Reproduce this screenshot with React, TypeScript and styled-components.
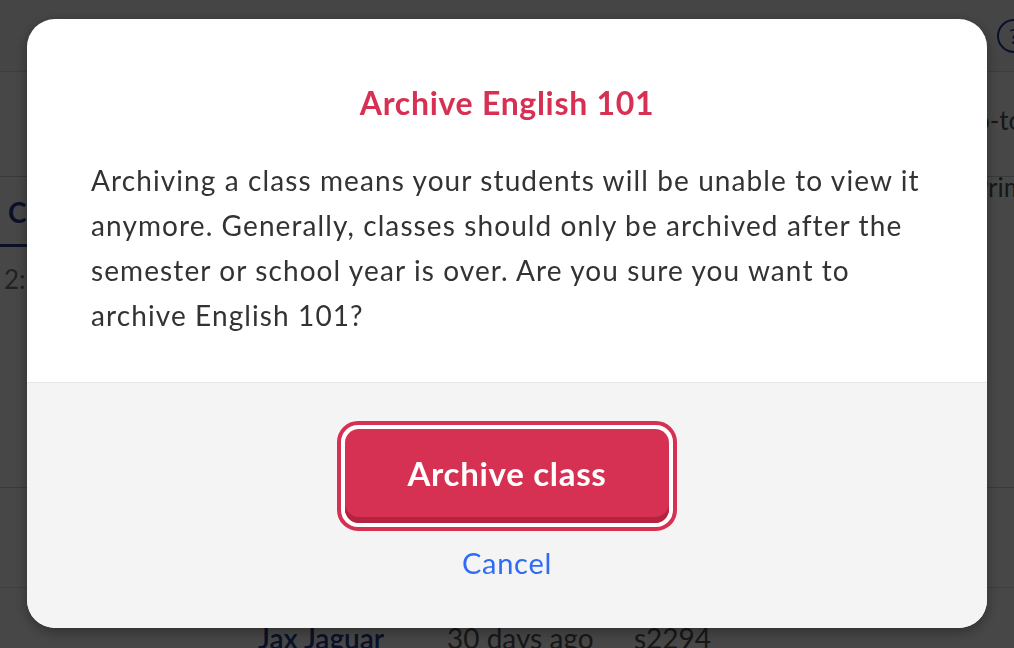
import styled, { createGlobalStyle } from "styled-components";

const GlobalStyle = createGlobalStyle`
    html, body {
        margin: 0;
        padding: 0;
        width: 100%;
        height: 100%;
        overflow: hidden;
        font-family: Lato, "Open Sans", sans-serif;
    }
`;

const students = [
    { name: "Iris Ibis", when: "28 days ago", id: "s2290" },
    { name: "Jax Jaguar", when: "30 days ago", id: "s2294" },
];

export default function App() {
    return (
        <>
            <GlobalStyle />
            <Page>
                <TopBar>
                    <HelpBadge>?</HelpBadge>
                </TopBar>
                <SubBar>
                    <SideText>Go-to class</SideText>
                </SubBar>
                <Tabs>
                    <Tab>Classes</Tab>
                    <SideText>Primary</SideText>
                </Tabs>
                <Summary>
                    <Time>2:24 PM</Time>
                </Summary>
                {students.map((s) => (
                    <Row key={s.id}>
                        <span />
                        <Name>{s.name}</Name>
                        <Cell>{s.when}</Cell>
                        <Cell>{s.id}</Cell>
                    </Row>
                ))}
            </Page>
            <Overlay>
                <Modal>
                    <Body>
                        <Title>Archive English 101</Title>
                        <Message>
                            Archiving a class means your students will be unable to view it anymore. Generally,
                            classes should only be archived after the semester or school year is over. Are you sure
                            you want to archive English 101?
                        </Message>
                    </Body>
                    <Footer>
                        <ButtonRing>
                            <DangerButton>Archive class</DangerButton>
                        </ButtonRing>
                        <CancelLink>Cancel</CancelLink>
                    </Footer>
                </Modal>
            </Overlay>
        </>
    );
}

const Page = styled.div`
    width: 1014px;
    height: 648px;
    overflow: hidden;
    background: #fff;
    color: #333;
`;

const TopBar = styled.div`
    height: 72px;
    border-bottom: 1px solid #ddd;
    display: flex;
    align-items: center;
    justify-content: flex-end;
    background: #f8f8f8;
    box-sizing: border-box;
`;

const HelpBadge = styled.div`
    width: 34px;
    height: 34px;
    border-radius: 50%;
    border: 2px solid #243c8f;
    color: #243c8f;
    display: flex;
    align-items: center;
    justify-content: center;
    font-size: 22px;
    margin-right: -17px;
    box-sizing: border-box;
    flex-shrink: 0;
`;

const SubBar = styled.div`
    height: 105px;
    border-bottom: 1px solid #c8cbd8;
    display: flex;
    justify-content: flex-end;
    padding-top: 32px;
    box-sizing: border-box;
    overflow: hidden;
`;

const SideText = styled.span`
    font-size: 26px;
    color: #555;
    white-space: nowrap;
    margin-right: -70px;
`;

const Tabs = styled.div`
    height: 70px;
    display: flex;
    justify-content: space-between;
    align-items: flex-start;
    overflow: hidden;

    ${SideText} {
        margin-top: -6px;
        margin-right: -47px;
    }
`;

const Tab = styled.div`
    font-size: 28px;
    font-weight: 700;
    color: #243c8f;
    padding: 18px 8px 0;
    width: 200px;
    height: 70px;
    box-sizing: border-box;
    border-bottom: 3px solid #243c8f;
`;

const Summary = styled.div`
    height: 241px;
    border-bottom: 1px solid #d0d0d0;
    box-sizing: border-box;
    padding: 16px 4px 0;
`;

const Time = styled.span`
    font-size: 26px;
    color: #777;
`;

const Row = styled.div`
    display: grid;
    grid-template-columns: 258px 189px 187px 1fr;
    height: 100px;
    align-items: center;
    font-size: 28px;
    color: #555;
    border-bottom: 1px solid #ddd;
    box-sizing: border-box;
`;

const Name = styled.span`
    white-space: nowrap;
    color: #243c8f;
    font-weight: 600;
`;

const Cell = styled.span`
    white-space: nowrap;
`;

const Overlay = styled.div`
    position: fixed;
    inset: 0;
    background: rgba(0, 0, 0, 0.72);
    display: flex;
    justify-content: center;
    align-items: flex-start;
    padding-top: 19px;
`;

const Modal = styled.div`
    width: 960px;
    border-radius: 28px;
    overflow: hidden;
    background: #fff;
    box-shadow: 0 4px 14px rgba(0, 0, 0, 0.35);
    font-family: Lato, "Open Sans", sans-serif;
`;

const Body = styled.div`
    padding: 64px 64px 44px;
    border-bottom: 1px solid #e6e6e6;
`;

const Title = styled.h2`
    margin: 0 0 35px;
    text-align: center;
    color: #d63052;
    font-size: 32px;
    letter-spacing: 0.7px;
    font-weight: 700;
    line-height: 40px;
`;

const Message = styled.p`
    margin: 0;
    color: #333;
    font-size: 28px;
    letter-spacing: 1.1px;
    line-height: 45px;
`;

const Footer = styled.div`
    background: #f4f4f4;
    display: flex;
    flex-direction: column;
    align-items: center;
    padding: 38px 0 47px;
`;

const ButtonRing = styled.div`
    border: 4px solid #d63052;
    background: #fff;
    border-radius: 21px;
    padding: 4px;
`;

const DangerButton = styled.button`
    display: block;
    width: 324px;
    height: 94px;
    border: none;
    border-radius: 14px;
    background: #d63052;
    box-shadow: inset 0 -6px 0 #b52340;
    color: #fff;
    font-family: inherit;
    font-size: 33px;
    letter-spacing: 0.7px;
    font-weight: 700;
    padding: 0 0 6px;
    cursor: pointer;
`;

const CancelLink = styled.a`
    margin-top: 14px;
    color: #2f6bf7;
    font-size: 29px;
    letter-spacing: 0.7px;
    line-height: 36px;
    cursor: pointer;
`;
